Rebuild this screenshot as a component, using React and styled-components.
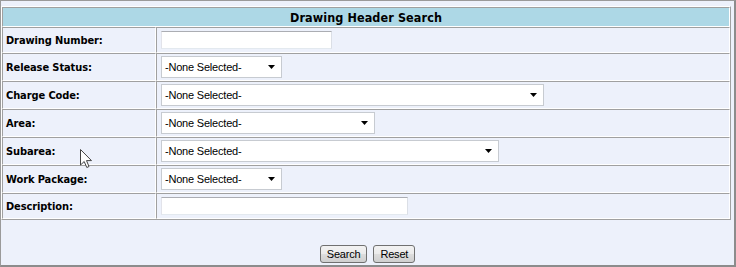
import React from 'react';
import styled, { createGlobalStyle } from 'styled-components';

const Global = createGlobalStyle`
  html, body { margin: 0; padding: 0; background: #edf1fb; }
  body { font-family: "DejaVu Sans Condensed", "DejaVu Sans", Verdana, sans-serif; }
`;

const Frame = styled.div`
  position: relative;
  box-sizing: border-box;
  width: 736px;
  height: 267px;
  background: #edf1fb;
  border-top: 1px solid #9a9a9a;
  border-left: 1px solid #9a9a9a;
  border-right: 2px solid #8c8c8c;
  border-bottom: 2px solid #8c8c8c;
  padding-top: 5px;
`;

const Table = styled.table`
  width: 730px;
  border-collapse: separate;
  border-spacing: 0;
  border: 1px solid;
  border-color: #ffffff #a0a0a0 #a0a0a0 #ffffff;
`;

const cellBorder = `
  border: 1px solid;
  border-color: #a0a0a0 #ffffff #ffffff #a0a0a0;
`;

const boldFace = `
  font-family: "DejaVu Sans Condensed", "DejaVu Sans", Verdana, sans-serif;
  font-stretch: condensed;
  font-weight: bold;
  color: #000;
`;

const HeaderCell = styled.th`
  ${cellBorder}
  ${boldFace}
  background: #add8e6;
  padding: 0;
  height: 18px;
  font-size: 12.5px;
  letter-spacing: 0.1px;
  text-align: center;
  vertical-align: middle;
`;

const LabelCell = styled.td`
  ${cellBorder}
  ${boldFace}
  box-sizing: border-box;
  width: 154px;
  padding: 0 3px;
  font-size: 11px;
  letter-spacing: -0.1px;
  white-space: nowrap;
`;

const FieldCell = styled.td`
  ${cellBorder}
  padding: 0 4px;
`;

const Inner = styled.div`
  display: flex;
  align-items: center;
  height: ${(p) => p.$h}px;
`;

const TextBox = styled.input`
  box-sizing: border-box;
  width: ${(p) => p.$w}px;
  height: 18px;
  margin: 0;
  padding: 1px 3px;
  background: #fff;
  border: 1px solid;
  border-color: #abadb3 #dbdfe6 #e3e9ef #e2e3ea;
  font-family: "Liberation Sans", Arial, sans-serif;
  font-size: 11px;
  outline: none;
`;

const Dropdown = styled.div`
  box-sizing: border-box;
  width: ${(p) => p.$w}px;
  height: 22px;
  display: flex;
  align-items: center;
  justify-content: space-between;
  padding: 0 6px 0 3px;
  background: #fff;
  border: 1px solid #c7cbd1;
  font-family: "Liberation Sans", Arial, sans-serif;
  font-size: 11px;
  letter-spacing: -0.2px;
  color: #000;
`;

const Arrow = styled.svg`
  display: block;
  width: 7px;
  height: 4px;
`;

const ButtonBar = styled.div`
  display: flex;
  justify-content: center;
  gap: 6px;
  margin-top: 25px;
`;

const Button = styled.button`
  box-sizing: border-box;
  height: 18px;
  margin: 0;
  padding: 0 6px;
  border: 1px solid #707070;
  border-radius: 3px;
  background: linear-gradient(#f2f2f2 0%, #ebebeb 48%, #dddddd 52%, #cfcfcf 100%);
  font-family: "Liberation Sans", Arial, sans-serif;
  font-size: 11px;
  letter-spacing: -0.2px;
  color: #000;
  line-height: 14px;
`;

const Cursor = styled.svg`
  position: absolute;
  left: 79px;
  top: 148px;
  width: 13px;
  height: 20px;
  pointer-events: none;
`;

const rows = [
  { label: 'Drawing Number:', kind: 'text', w: 171, h: 24 },
  { label: 'Release Status:', kind: 'select', w: 121, h: 26 },
  { label: 'Charge Code:', kind: 'select', w: 383, h: 26 },
  { label: 'Area:', kind: 'select', w: 214, h: 26 },
  { label: 'Subarea:', kind: 'select', w: 338, h: 26 },
  { label: 'Work Package:', kind: 'select', w: 121, h: 26 },
  { label: 'Description:', kind: 'text', w: 247, h: 24 },
];

function Select({ w }) {
  return (
    <Dropdown $w={w}>
      <span>-None Selected-</span>
      <Arrow viewBox="0 0 7 4">
        <path d="M0 0 H7 L3.5 4 Z" fill="#000" />
      </Arrow>
    </Dropdown>
  );
}

export default function App() {
  return (
    <>
      <Global />
      <Frame>
        <Table>
          <tbody>
            <tr>
              <HeaderCell colSpan={2}>Drawing Header Search</HeaderCell>
            </tr>
            {rows.map((r) => (
              <tr key={r.label}>
                <LabelCell>
                  <Inner $h={r.h}>{r.label}</Inner>
                </LabelCell>
                <FieldCell>
                  <Inner $h={r.h}>
                    {r.kind === 'text' ? <TextBox $w={r.w} /> : <Select w={r.w} />}
                  </Inner>
                </FieldCell>
              </tr>
            ))}
          </tbody>
        </Table>
        <ButtonBar>
          <Button>Search</Button>
          <Button>Reset</Button>
        </ButtonBar>
        <Cursor viewBox="0 0 13 20">
          <path
            d="M0.5 0.5 L0.5 16 L4.2 12.5 L6.8 18.5 L9 17.5 L6.5 11.6 L11.5 11.6 Z"
            fill="#fff"
            stroke="#444"
            strokeWidth="1"
            strokeLinejoin="round"
          />
        </Cursor>
      </Frame>
    </>
  );
}
